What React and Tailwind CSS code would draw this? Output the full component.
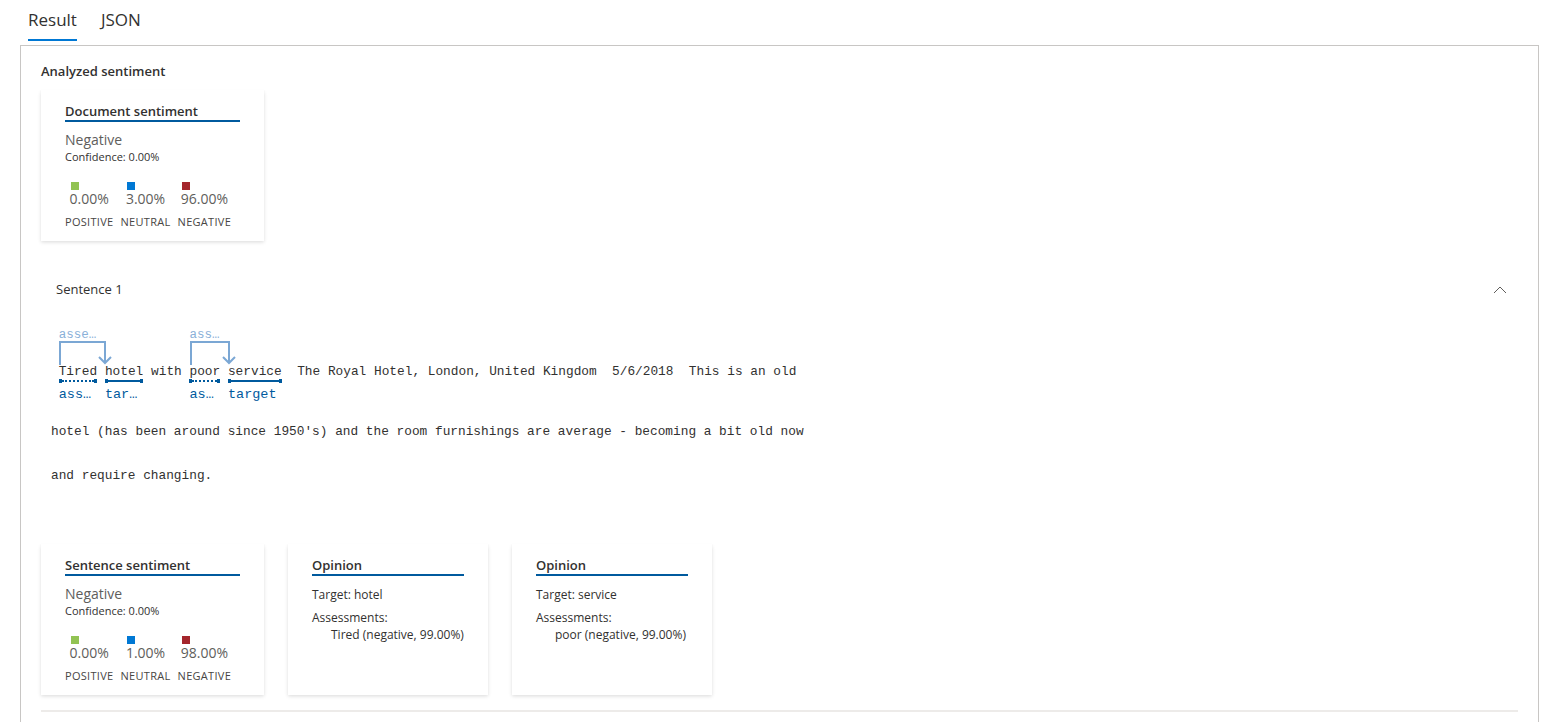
import React from "react";

const sans = { fontFamily: "'Open Sans', 'Noto Sans', sans-serif" };

function Legend({ items }) {
  return (
    <div className="flex mt-[18px] gap-[7px]">
      {items.map((it) => (
        <div key={it.label} className="flex flex-col items-center">
          <div className="flex flex-col items-start">
            <div className={`w-[8px] h-[8px] ml-[1px] ${it.color}`}></div>
            <span className="text-[14px] leading-[20px] text-[#605e5c] mt-[-1px]">{it.value}</span>
          </div>
          <span className="text-[11px] leading-[14px] tracking-[0.3px] text-[#484644] mt-[6px] whitespace-nowrap">{it.label}</span>
        </div>
      ))}
    </div>
  );
}

function SentimentCard({ title, values }) {
  const items = [
    { label: "POSITIVE", value: values[0], color: "bg-[#92c353]" },
    { label: "NEUTRAL", value: values[1], color: "bg-[#0078d4]" },
    { label: "NEGATIVE", value: values[2], color: "bg-[#a4262c]" },
  ];
  return (
    <div className="w-[223px] bg-white px-6 pt-[12px] pb-[12px] shadow-[0_1.6px_3.6px_rgba(0,0,0,0.132),0_0.3px_0.9px_rgba(0,0,0,0.108)]">
      <div className="text-[13px] leading-[18px] font-semibold text-[#323130] border-b-2 border-[#005a9e]">{title}</div>
      <div className="text-[14px] leading-[20px] text-[#605e5c] mt-[8px]">Negative</div>
      <div className="text-[11px] leading-[14px] text-[#323130]">Confidence: 0.00%</div>
      <Legend items={items} />
    </div>
  );
}

function OpinionCard({ target, assessment }) {
  return (
    <div className="w-[200px] bg-white px-6 pt-[12px] pb-[12px] shadow-[0_1.6px_3.6px_rgba(0,0,0,0.132),0_0.3px_0.9px_rgba(0,0,0,0.108)]">
      <div className="text-[13px] leading-[18px] font-semibold text-[#323130] border-b-2 border-[#005a9e]">Opinion</div>
      <div className="text-[12px] leading-[16px] text-[#323130] mt-[11px]">Target: {target}</div>
      <div className="text-[12px] leading-[16px] text-[#323130] mt-[7px]">Assessments:</div>
      <div className="text-[12px] leading-[16px] text-[#323130] mt-[1px] pl-[19px]">{assessment}</div>
    </div>
  );
}

// token column: top label / arrow space / word / underline / bottom label
function Token({ word, top, bottom, dotted }) {
  return (
    <span className="inline-flex flex-col align-top" style={{ width: `${word.length * 7.7}px` }}>
      <span className="h-[18px] leading-[18px] text-[12.5px] text-[#8ab0d8] truncate">{top || ""}</span>
      <span className="h-[20px]"></span>
      <span className="h-[16px] leading-[16px] text-[#323130]">{word}</span>
      <span className="h-[4px] flex items-center mt-[-1px]">
        <span className="w-[3px] h-[4px] bg-[#005a9e]"></span>
        <span className={`flex-1 ${dotted ? "border-t-2 border-dotted" : "h-[2px] bg-[#005a9e]"} border-[#005a9e]`}></span>
        <span className="w-[3px] h-[4px] bg-[#005a9e]"></span>
      </span>
      <span className="h-[23px] leading-[23px] text-[13.5px] text-[#005a9e] truncate">{bottom}</span>
    </span>
  );
}

function Plain({ text }) {
  return (
    <span className="inline-flex flex-col align-top">
      <span className="h-[38px]"></span>
      <span className="h-[16px] leading-[16px] text-[#323130] whitespace-pre">{text}</span>
      <span className="h-[26px]"></span>
    </span>
  );
}

function Arrow({ x1, x2 }) {
  return (
    <g stroke="#7ba7d4" strokeWidth="2" fill="none">
      <polyline points={`${x1},39 ${x1},16 ${x2},16 ${x2},37`} />
      <polyline points={`${x2 - 6},31 ${x2},37 ${x2 + 6},31`} />
    </g>
  );
}

export default function App() {
  const mono = { fontFamily: "'Liberation Mono', 'DejaVu Sans Mono', monospace", fontSize: "12.8px" };
  return (
    <div className="min-h-[722px] bg-white" style={sans}>
      {/* tabs */}
      <div className="flex h-[45px] pl-[28px] gap-[24px]">
        <div className="flex flex-col">
          <span className="text-[17px] leading-[39px] text-[#323130]">Result</span>
          <span className="h-[2px] bg-[#0078d4]"></span>
        </div>
        <span className="text-[17px] leading-[39px] text-[#323130]">JSON</span>
      </div>

      <div className="ml-[20px] mr-[16px] border-t border-l border-r border-[#c8c6c4] pl-[20px] pr-[20px] pt-[18px] min-h-[700px]">
        <div className="text-[13px] leading-[18px] font-semibold text-[#323130] mt-[-2px]">Analyzed sentiment</div>
        <div className="mt-[10px]">
          <SentimentCard title="Document sentiment" values={["0.00%", "3.00%", "96.00%"]} />
        </div>

        {/* sentence section */}
        <div className="mt-[27px]">
          <div className="flex items-center justify-between h-[44px] pl-[15px] pr-[11px]">
            <span className="text-[13px] text-[#323130]">Sentence 1</span>
            <svg width="14" height="8" viewBox="0 0 14 8">
              <polyline points="1,7 7,1 13,7" fill="none" stroke="#605e5c" strokeWidth="1" />
            </svg>
          </div>

          <div className="mt-[14px] pl-[10px]" style={mono}>
            <div className="relative whitespace-pre h-[84px]">
              <svg className="absolute left-0 top-0" width="300" height="40">
                <Arrow x1={9} x2={54} />
                <Arrow x1={140} x2={178} />
              </svg>
              <Plain text=" " />
              <Token word="Tired" top="assessment" bottom="assessment" dotted />
              <Plain text=" " />
              <Token word="hotel" bottom="target" />
              <Plain text=" with " />
              <Token word="poor" top="assessment" bottom="assessment" dotted />
              <Plain text=" " />
              <Token word="service" bottom="target" />
              <Plain text="  The Royal Hotel, London, United Kingdom  5/6/2018  This is an old" />
            </div>
            <div className="leading-[44px] text-[#323130] whitespace-pre">hotel (has been around since 1950's) and the room furnishings are average - becoming a bit old now</div>
            <div className="leading-[44px] text-[#323130] whitespace-pre">and require changing.</div>
          </div>

          <div className="flex gap-[24px] mt-[46px] items-stretch">
            <SentimentCard title="Sentence sentiment" values={["0.00%", "1.00%", "98.00%"]} />
            <OpinionCard target="hotel" assessment="Tired (negative, 99.00%)" />
            <OpinionCard target="service" assessment="poor (negative, 99.00%)" />
          </div>
          <div className="mt-[15px] h-[2px] bg-[#edebe9]"></div>
        </div>
      </div>
    </div>
  );
}
